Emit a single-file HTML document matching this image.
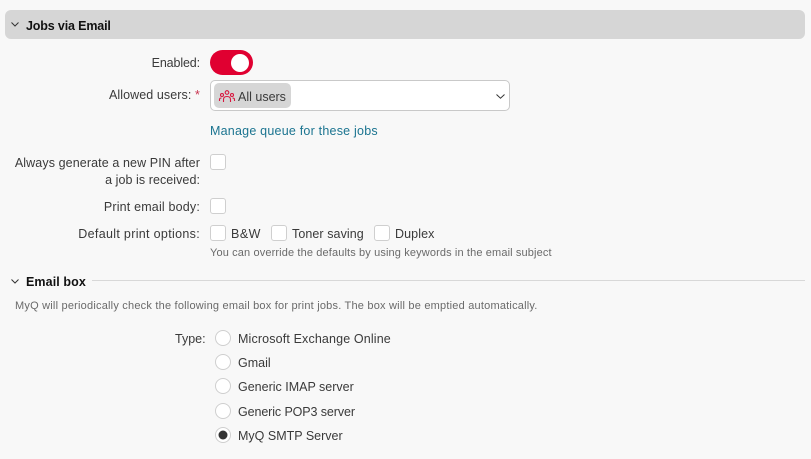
<!DOCTYPE html>
<html><head><meta charset="utf-8">
<style>
html,body{margin:0;padding:0;width:811px;height:459px;overflow:hidden;background:#f8f8f8}
body{position:relative;font-family:"Liberation Sans",sans-serif;font-size:12.5px;color:#3a3a3a}
.t{position:absolute;white-space:nowrap;line-height:16px}
.r{position:absolute;white-space:nowrap;line-height:16px;right:611px;text-align:right}
.cb{position:absolute;width:14px;height:14px;border:1px solid #cfcfcf;border-radius:3px;background:#fff}
.rd{position:absolute;width:14px;height:14px;border:1px solid #cfcfcf;border-radius:50%;background:#fff}
svg{position:absolute;overflow:visible}
</style></head><body>
<div style="position:absolute;left:5px;top:10px;width:800px;height:29px;background:#d6d6d6;border-radius:6px"></div>
<svg style="left:11px;top:22px" width="8" height="5" viewBox="0 0 8 5"><path d="M.5.5 4 4 7.500.5" fill="none" stroke="#333" stroke-width="1"/></svg>
<div class="t" style="left:26px;top:18px;font-weight:bold;color:#111;letter-spacing:-.15px">Jobs via Email</div>

<div class="r" style="top:55px;letter-spacing:-.12px">Enabled:</div>
<div style="position:absolute;left:210px;top:50px;width:43px;height:25px;border-radius:13px;background:#e00031"></div>
<div style="position:absolute;left:231px;top:54px;width:18px;height:18px;border-radius:50%;background:#fff"></div>

<div class="t" style="left:109px;top:87px;letter-spacing:.08px">Allowed users: <span style="color:#c8334f">*</span></div>
<div style="position:absolute;left:210px;top:80px;width:298px;height:29px;border:1px solid #c9c9c9;border-radius:5px;background:#fff"></div>
<div style="position:absolute;left:214px;top:83px;width:77px;height:25px;border-radius:5px;background:#d6d6d6"></div>
<svg style="left:219px;top:90px" width="16" height="14" viewBox="0 0 16 14" fill="none" stroke="#d8173f" stroke-width="1.100"><circle cx="8" cy="2.500" r="1.800"/><circle cx="3" cy="5" r="1.500"/><circle cx="13" cy="5" r="1.500"/><path d="M4.500 12V9.500Q4.500 6.500 8 6.500T11.500 9.500V12M.5 11V9.500Q.5 8 2.500 8M15.500 11V9.500Q15.500 8 13.500 8"/></svg>
<div class="t" style="left:238px;top:89px">All users</div>
<svg style="left:496px;top:94px" width="9" height="5" viewBox="0 0 9 5"><path d="M.5.5 4.500 4.200 8.500.5" fill="none" stroke="#333" stroke-width="1"/></svg>

<div class="t" style="left:210px;top:123px;color:#1b7490;letter-spacing:.22px">Manage queue for these jobs</div>

<div class="r" style="top:155px;letter-spacing:.1px">Always generate a new PIN after</div>
<div class="r" style="top:172px;letter-spacing:.06px">a job is received:</div>
<div class="cb" style="left:210px;top:154px"></div>

<div class="r" style="top:199px;letter-spacing:.18px">Print email body:</div>
<div class="cb" style="left:210px;top:198px"></div>

<div class="r" style="top:226px;letter-spacing:.32px">Default print options:</div>
<div class="cb" style="left:210px;top:225px"></div>
<div class="t" style="left:231px;top:226px;letter-spacing:.5px">B&amp;W</div>
<div class="cb" style="left:271px;top:225px"></div>
<div class="t" style="left:292px;top:226px;letter-spacing:.08px">Toner saving</div>
<div class="cb" style="left:374px;top:225px"></div>
<div class="t" style="left:395px;top:226px;letter-spacing:.1px">Duplex</div>
<div class="t" style="left:210px;top:245px;font-size:11px;color:#6a6a6a;letter-spacing:.13px">You can override the defaults by using keywords in the email subject</div>

<svg style="left:11px;top:279px" width="8" height="5" viewBox="0 0 8 5"><path d="M.5.5 4 4 7.500.5" fill="none" stroke="#333" stroke-width="1"/></svg>
<div class="t" style="left:26px;top:274px;font-weight:bold;color:#111;letter-spacing:.1px">Email box</div>
<div style="position:absolute;left:92px;top:280px;width:713px;height:1px;background:#d8d8d8"></div>
<div class="t" style="left:15px;top:298px;font-size:11px;color:#6a6a6a;letter-spacing:.21px">MyQ will periodically check the following email box for print jobs. The box will be emptied automatically.</div>

<div class="t" style="left:175px;top:331px">Type:</div>
<div class="rd" style="left:215px;top:330px"></div>
<div class="t" style="left:238px;top:331px;letter-spacing:.14px">Microsoft Exchange Online</div>
<div class="rd" style="left:215px;top:354px"></div>
<div class="t" style="left:238px;top:355px">Gmail</div>
<div class="rd" style="left:215px;top:378px"></div>
<div class="t" style="left:238px;top:379px">Generic IMAP server</div>
<div class="rd" style="left:215px;top:403px"></div>
<div class="t" style="left:238px;top:404px;letter-spacing:-.1px">Generic POP3 server</div>
<div class="rd" style="left:215px;top:427px"></div>
<svg style="left:215px;top:427px" width="16" height="16" viewBox="0 0 16 16"><circle cx="8" cy="8" r="4.500" fill="#333"/></svg>
<div class="t" style="left:238px;top:428px">MyQ SMTP Server</div>
</body></html>
